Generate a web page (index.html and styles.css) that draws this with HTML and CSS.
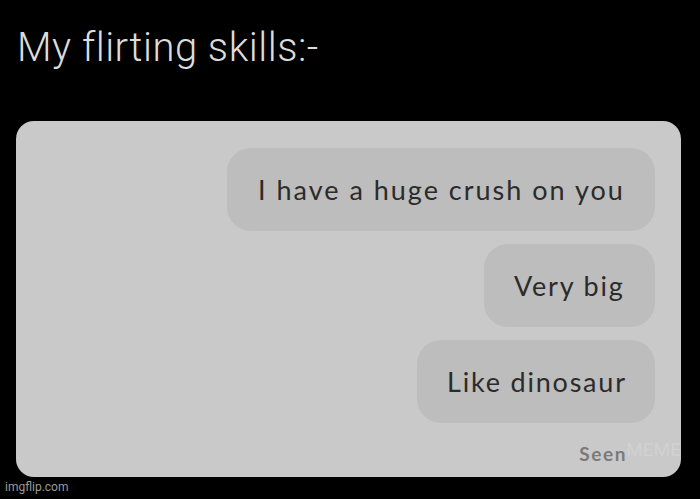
FILE: index.html
```html
<!DOCTYPE html>
<html>
<head>
<meta charset="utf-8">
<link rel="stylesheet" href="styles.css">
</head>
<body>
<div class="page">
  <h1 class="title">My flirting skills:-</h1>
  <div class="card">
    <div class="bubble b1">I have a huge crush on you</div>
    <div class="bubble b2">Very big</div>
    <div class="bubble b3">Like dinosaur</div>
    <div class="seen">Seen</div>
    <div class="watermark">MEME</div>
  </div>
  <div class="credit">imgflip.com</div>
</div>
</body>
</html>
```
FILE: styles.css
```css
html, body {
  margin: 0;
  padding: 0;
  background: #000;
  width: 700px;
  height: 499px;
  overflow: hidden;
}
.page {
  display: flex;
  flex-direction: column;
  padding: 0 19px 0 16px;
}
.title {
  margin: 0;
  padding: 22px 0 0 1px;
  height: 121px;
  box-sizing: border-box;
  font-family: Roboto, "Liberation Sans", sans-serif;
  font-weight: 300;
  font-size: 40px;
  line-height: 52px;
  color: #dcdcdc;
  letter-spacing: 0.5px;
}
.card {
  position: relative;
  height: 356px;
  background: #c9c9c9;
  border-radius: 18px;
  display: flex;
  flex-direction: column;
  align-items: flex-end;
  padding: 27px 26px 0 0;
  box-sizing: border-box;
  gap: 13px;
}
.bubble {
  height: 83px;
  display: flex;
  align-items: center;
  padding: 0 0 0 31px;
  box-sizing: border-box;
  background: #bdbdbd;
  border-radius: 24px;
  font-family: Lato, "Open Sans", sans-serif;
  font-size: 27px;
  color: #2b2b2b;
  letter-spacing: 2px;
}
.b1 { width: 428px; }
.b2 { width: 171px; }
.b3 { width: 238px; }
.b2, .b3 { padding-left: 30px; letter-spacing: 1.8px; }
.seen {
  margin: 6px 28px 0 0;
  font-family: Lato, sans-serif;
  font-weight: 700;
  font-size: 19px;
  letter-spacing: 1.6px;
  color: #7a7a7a;
}
.watermark {
  position: absolute;
  right: 0;
  bottom: 16px;
  font-family: Roboto, sans-serif;
  font-size: 19px;
  color: rgba(255,255,255,0.16);
}
.credit {
  padding: 3px 0 0 0;
  margin-left: -11px;
  font-family: Roboto, "Liberation Sans", sans-serif;
  font-size: 12px;
  color: #9a9a9a;
}
```
